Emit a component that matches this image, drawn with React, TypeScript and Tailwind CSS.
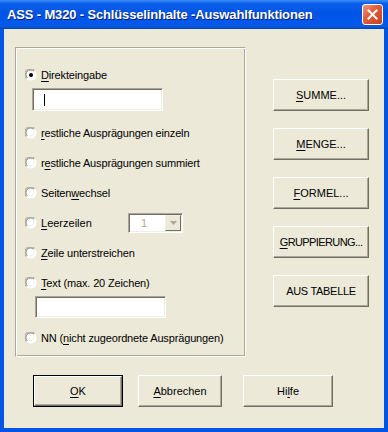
import React from 'react';

// Windows XP style dialog: ASS - M320 Auswahlfunktionen

const font = "font-['Liberation_Sans',Arial,sans-serif]";

function Radio({ checked = false }: { checked?: boolean }) {
  return (
    <svg width="12" height="12" viewBox="0 0 12 12" className="shrink-0">
      <circle cx="6" cy="6" r="5.5" fill="#fff" />
      <path d="M1.2 9.6 A5.5 5.5 0 0 1 9.6 1.2" stroke="#aca899" strokeWidth="1" fill="none" />
      <path d="M2.2 8.8 A4.5 4.5 0 0 1 8.8 2.2" stroke="#716f64" strokeWidth="1" fill="none" />
      <path d="M9.8 2.4 A5.5 5.5 0 0 1 2.4 9.8" stroke="#ffffff" strokeWidth="1" fill="none" />
      <path d="M8.9 3.3 A4.5 4.5 0 0 1 3.3 8.9" stroke="#f1efe2" strokeWidth="1" fill="none" />
      {checked && <circle cx="6" cy="6" r="2" fill="#000" />}
    </svg>
  );
}

// label with one underlined access key
function Label({ text, k }: { text: string; k: number }) {
  return (
    <span>
      {text.slice(0, k)}
      <span className="underline underline-offset-[2px]">{text[k]}</span>
      {text.slice(k + 1)}
    </span>
  );
}

function RadioRow({ text, k, checked, className = '' }: { text: string; k: number; checked?: boolean; className?: string }) {
  return (
    <div className={`flex items-center h-[16px] gap-[4px] tracking-[-0.15px] ${className}`}>
      <Radio checked={checked} />
      <Label text={text} k={k} />
    </div>
  );
}

function Button({ children, w, isDefault = false }: { children: React.ReactNode; w: string; isDefault?: boolean }) {
  const inner =
    'flex items-center justify-center h-full whitespace-nowrap bg-[#ece9d8] border border-t-white border-l-white border-r-[#716f64] border-b-[#716f64] shadow-[inset_-1px_-1px_0_#aca899]';
  return isDefault ? (
    <div className={`${w} h-[32px] border border-black`}>
      <div className={inner}>{children}</div>
    </div>
  ) : (
    <div className={`${w} h-[32px]`}>
      <div className={inner}>{children}</div>
    </div>
  );
}

function TextBox({ className = '', children }: { className?: string; children?: React.ReactNode }) {
  return (
    <div
      className={`bg-white border border-t-[#aca899] border-l-[#aca899] border-r-white border-b-white shadow-[inset_1px_1px_0_#716f64,inset_-1px_-1px_0_#f1efe2] ${className}`}
    >
      {children}
    </div>
  );
}

export default function App() {
  return (
    <div className={`w-[388px] h-[432px] flex flex-col bg-[#0055e5] ${font} text-[11px] text-black`}>
      {/* title bar */}
      <div className="h-[29px] shrink-0 flex items-center justify-between pl-[7px] pr-[5px] bg-[linear-gradient(to_bottom,#3c8ef5_0%,#0a5fea_12%,#0054e3_45%,#0058ee_80%,#0a5ad8_92%,#0040c8_100%)]">
        <span className="text-white font-bold text-[13px] tracking-[-0.15px] [text-shadow:1px_1px_0_#0a1e6e]">
          ASS - M320 - Schlüsselinhalte -Auswahlfunktionen
        </span>
        <div className="w-[21px] h-[21px] rounded-[3px] border border-white bg-[linear-gradient(135deg,#eb9c84_0%,#e0603e_40%,#c8401c_100%)] flex items-center justify-center">
          <svg width="11" height="11" viewBox="0 0 11 11">
            <path d="M1.5 1.5 L9.5 9.5 M9.5 1.5 L1.5 9.5" stroke="#fff" strokeWidth="2" strokeLinecap="square" />
          </svg>
        </div>
      </div>

      {/* client area */}
      <div className="flex-1 mx-[4px] mb-[4px] bg-[#ece9d8] flex flex-col">
        <div className="flex pl-[11px] pt-[18px]">
          {/* group box */}
          <div className="w-[231px] h-[310px] border border-t-[#aca899] border-l-[#aca899] border-r-white border-b-white shadow-[inset_1px_1px_0_#fff,inset_-1px_-1px_0_#aca899] pl-[9px] pt-[19px] flex flex-col">
            <RadioRow text="Direkteingabe" k={0} checked />
            <TextBox className="ml-[7px] mt-[5px] w-[131px] h-[23px] relative">
              <div className="absolute left-[11px] top-[5px] w-px h-[12px] bg-black" />
            </TextBox>
            <RadioRow text="restliche Ausprägungen einzeln" k={0} className="mt-[14px]" />
            <RadioRow text="restliche Ausprägungen summiert" k={1} className="mt-[14px]" />
            <RadioRow text="Seitenwechsel" k={6} className="mt-[14px]" />
            <div className="flex items-center h-[16px] mt-[14px]">
              <div className="flex items-center gap-[4px] w-[103px]">
                <Radio />
                <Label text="Leerzeilen" k={0} />
              </div>
              <TextBox className="w-[55px] h-[20px] bg-[#f4f2e8] flex items-center">
                <span className="flex-1 pl-[12px] text-[#aca899]">1</span>
                <div className="w-[16px] h-[16px] mr-[1px] bg-[#ece9d8] border border-t-[#f1efe2] border-l-[#f1efe2] border-r-[#716f64] border-b-[#716f64] flex items-center justify-center">
                  <svg width="7" height="4" viewBox="0 0 7 4">
                    <path d="M0 0 H7 L3.5 4 Z" fill="#aca899" />
                  </svg>
                </div>
              </TextBox>
            </div>
            <RadioRow text="Zeile unterstreichen" k={0} className="mt-[14px]" />
            <RadioRow text="Text (max. 20 Zeichen)" k={0} className="mt-[14px]" />
            <TextBox className="ml-[10px] mt-[5px] w-[131px] h-[22px]" />
            <RadioRow text="NN (nicht zugeordnete Ausprägungen)" k={4} className="mt-[12px]" />
          </div>

          {/* right buttons */}
          <div className="ml-[27px] mt-[32px] flex flex-col gap-[17px]">
            <Button w="w-[96px]"><Label text="SUMME..." k={0} /></Button>
            <Button w="w-[96px]"><Label text="MENGE..." k={0} /></Button>
            <Button w="w-[96px]"><Label text="FORMEL..." k={0} /></Button>
            <Button w="w-[96px]">
              <span className="tracking-[-0.6px]"><Label text="GRUPPIERUNG..." k={0} /></span>
            </Button>
            <Button w="w-[96px]"><span className="tracking-[-0.3px]">AUS TABELLE</span></Button>
          </div>
        </div>

        {/* bottom buttons */}
        <div className="flex pl-[29px] mt-[18px]">
          <Button w="w-[90px]" isDefault><Label text="OK" k={0} /></Button>
          <div className="ml-[15px]">
            <Button w="w-[84px]"><Label text="Abbrechen" k={0} /></Button>
          </div>
          <div className="ml-[21px]">
            <Button w="w-[90px]"><Label text="Hilfe" k={2} /></Button>
          </div>
        </div>
      </div>
    </div>
  );
}
